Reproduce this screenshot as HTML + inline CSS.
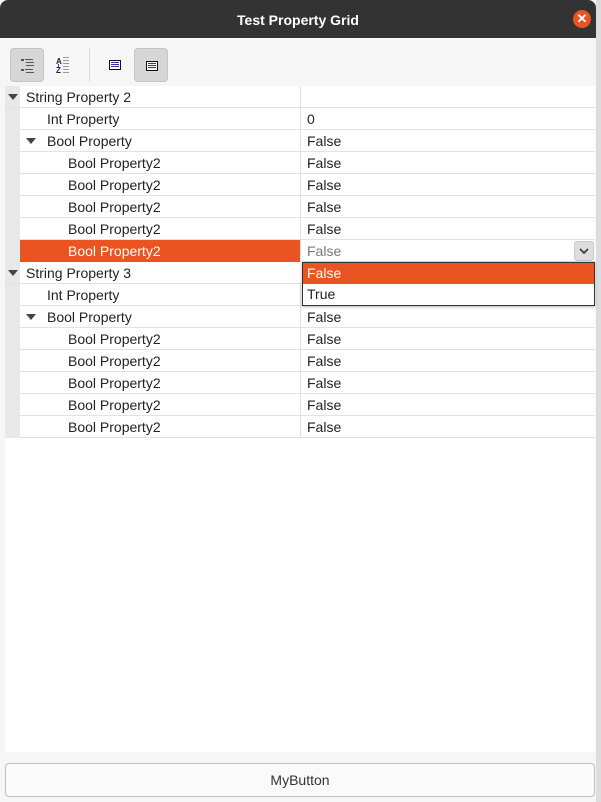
<!DOCTYPE html>
<html><head><style>
*{margin:0;padding:0;box-sizing:border-box}
body{width:601px;height:802px;background:#f6f6f6;font-family:"Liberation Sans",sans-serif;font-size:14px;color:#222;position:relative;overflow:hidden}
.t{position:absolute;left:0;top:0;width:596px;height:38px;background:#333;border-radius:8px 8px 0 0;color:#fff;font-weight:bold;font-size:14px;text-align:center;line-height:40px}
.x{position:absolute;left:573px;top:10px;width:18px;height:18px;border-radius:50%;background:#e95420;color:#fff;font-size:13px;line-height:18px;text-align:center;font-weight:bold}
.edge{position:absolute;left:596px;top:0;width:5px;height:802px;background:#ddd}
.tb{position:absolute;top:48px;width:34px;height:34px;border-radius:4px}
.tb.on{background:#d6d6d6;border:1px solid #c4c4c4}
.grid{position:absolute;left:5px;top:86px;width:590px;height:666px;background:#fff}
.gut{position:absolute;left:5px;top:86px;width:15px;height:352px;background:#e8e8e8}
.r{position:absolute;left:20px;width:575px;height:22px;border-bottom:1px solid #e2e2e2;line-height:23px}
.r .n{position:absolute;top:0}
.r .v{position:absolute;left:287px;top:0}
.r .s{position:absolute;left:280px;top:0;width:1px;height:22px;background:#e2e2e2}
.arr{position:absolute;width:0;height:0;border-left:5px solid transparent;border-right:5px solid transparent;border-top:6px solid #444}
.btn{position:absolute;left:5px;top:763px;width:590px;height:34px;border:1px solid #c0c0c0;border-radius:4px;background:#fafafa;text-align:center;line-height:32px;color:#333}
</style></head><body>
<div class="t">Test Property Grid</div><div class="x">✕</div>
<div class="edge"></div>
<div class="tb on" style="left:10px"><svg width="34" height="34"><g fill="#555"><rect x="10" y="10" width="3" height="2"/><rect x="14" y="10" width="8" height="1"/><rect x="15" y="13" width="8" height="1"/><rect x="15" y="16" width="8" height="1"/><rect x="10" y="20" width="3" height="2"/><rect x="14" y="20" width="8" height="1"/><rect x="15" y="23" width="8" height="1"/></g></svg></div>
<div class="tb" style="left:46px"><svg width="34" height="34"><text x="10" y="16" font-size="8" font-weight="bold" fill="#222" font-family="Liberation Sans">A</text><text x="10" y="25" font-size="8" font-weight="bold" fill="#222" font-family="Liberation Sans">Z</text><rect x="12" y="16" width="1" height="3" fill="#33c"/><g fill="#999"><rect x="17" y="9" width="6" height="1"/><rect x="17" y="12" width="6" height="1"/><rect x="17" y="15" width="6" height="1"/><rect x="17" y="18" width="6" height="1"/><rect x="17" y="21" width="6" height="1"/><rect x="17" y="24" width="6" height="1"/></g></svg></div>
<div style="position:absolute;left:89px;top:48px;width:1px;height:34px;background:#ddd"></div>
<div class="tb" style="left:98px"><svg width="34" height="34"><rect x="11.5" y="12.5" width="11" height="9" fill="#fff" stroke="#111"/><g fill="#33a"><rect x="13" y="14" width="8" height="1"/><rect x="13" y="16" width="8" height="1"/><rect x="13" y="18" width="8" height="1"/></g></svg></div>
<div class="tb on" style="left:134px"><svg width="34" height="34"><rect x="11.5" y="12.5" width="11" height="9" fill="#fff" stroke="#111"/><g fill="#33a"><rect x="13" y="14" width="8" height="1"/><rect x="13" y="16" width="8" height="1"/><rect x="13" y="18" width="8" height="1"/></g></svg></div>
<div class="grid"></div><div class="gut"></div>

<div class="r" style="top:86px;left:5px;width:590px"><div class="arr" style="left:3px;top:8px"></div><span class="n" style="left:21px">String Property 2</span><div class="s" style="left:295px"></div></div>
<div class="r" style="top:108px"><span class="n" style="left:27px">Int Property</span><div class="s"></div><span class="v">0</span></div>
<div class="r" style="top:130px"><div class="arr" style="left:6px;top:8px"></div><span class="n" style="left:27px">Bool Property</span><div class="s"></div><span class="v">False</span></div>
<div class="r" style="top:152px"><span class="n" style="left:48px">Bool Property2</span><div class="s"></div><span class="v">False</span></div>
<div class="r" style="top:174px"><span class="n" style="left:48px">Bool Property2</span><div class="s"></div><span class="v">False</span></div>
<div class="r" style="top:196px"><span class="n" style="left:48px">Bool Property2</span><div class="s"></div><span class="v">False</span></div>
<div class="r" style="top:218px"><span class="n" style="left:48px">Bool Property2</span><div class="s"></div><span class="v">False</span></div>
<div class="r" style="top:240px"><div style="position:absolute;left:0;top:0;width:280px;height:22px;background:#e95420"></div><span class="n" style="left:48px;color:#fff">Bool Property2</span><div class="s"></div><span class="v" style="color:#777">False</span>
<div style="position:absolute;left:554px;top:1px;width:20px;height:20px;border-radius:3px;background:#ddd;border:1px solid #c8c8c8"><svg width="18" height="18"><path d="M5 7 L9 11 L13 7" fill="none" stroke="#333" stroke-width="1.6"/></svg></div></div>
<div class="r" style="top:262px;left:5px;width:590px"><div class="arr" style="left:3px;top:8px"></div><span class="n" style="left:21px">String Property 3</span></div>
<div class="r" style="top:284px"><span class="n" style="left:27px">Int Property</span><div class="s"></div></div>
<div class="r" style="top:306px"><div class="arr" style="left:6px;top:8px"></div><span class="n" style="left:27px">Bool Property</span><div class="s"></div><span class="v">False</span></div>
<div class="r" style="top:328px"><span class="n" style="left:48px">Bool Property2</span><div class="s"></div><span class="v">False</span></div>
<div class="r" style="top:350px"><span class="n" style="left:48px">Bool Property2</span><div class="s"></div><span class="v">False</span></div>
<div class="r" style="top:372px"><span class="n" style="left:48px">Bool Property2</span><div class="s"></div><span class="v">False</span></div>
<div class="r" style="top:394px"><span class="n" style="left:48px">Bool Property2</span><div class="s"></div><span class="v">False</span></div>
<div class="r" style="top:416px"><span class="n" style="left:48px">Bool Property2</span><div class="s"></div><span class="v">False</span></div>

<div style="position:absolute;left:302px;top:262px;width:293px;height:44px;background:#fff;border:1px solid #333;box-shadow:0 1px 3px rgba(0,0,0,.3)">
<div style="height:21px;background:#e95420;color:#fff;padding-left:4px;line-height:20px">False</div>
<div style="height:21px;padding-left:4px;line-height:21px">True</div></div>

<div class="btn">MyButton</div>
</body></html>
